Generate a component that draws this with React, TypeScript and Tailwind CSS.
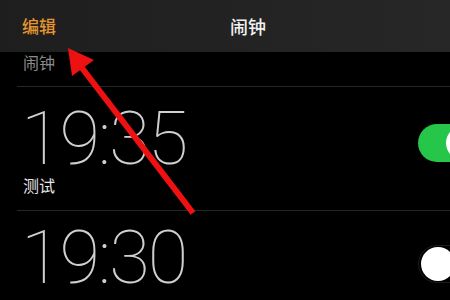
import React from "react";

const cjk = { fontFamily: '"Noto Sans CJK SC", "Noto Sans", sans-serif' };
const thin = { fontFamily: 'Roboto, "Liberation Sans", sans-serif' };

function Toggle({ on }: { on: boolean }) {
  return (
    <div
      className={
        "flex h-[38px] w-[64px] shrink-0 items-center rounded-full px-[2px] " +
        (on ? "bg-[#26c64a] justify-end" : "bg-black border border-[#1c1c1c] justify-start")
      }
    >
      <div className="h-[34px] w-[34px] rounded-full bg-white" />
    </div>
  );
}

export default function App() {
  return (
    <div className="relative h-[300px] w-[450px] overflow-hidden bg-black">
      <div className="flex h-[52px] items-center bg-gradient-to-r from-[#1e1e1e] to-[#272727] pl-[22px]" style={cjk}>
        <span className="text-[17px] font-medium text-[#e3952f]">编辑</span>
        <span className="ml-[174px] text-[18px] font-medium text-[#f2f2f2]">闹钟</span>
      </div>
      <div className="ml-[17px] flex h-[35px] items-start border-b border-[#262626] pl-[6px]">
        <span className="text-[16px] leading-[20px] text-[#8c8c8c]" style={cjk}>闹钟</span>
      </div>
      <div className="ml-[17px] flex h-[124px] items-start justify-between border-b border-[#262626] pl-[4px]">
        <div className="mt-[22px] flex flex-col">
          <span className="text-[74px] font-thin leading-[60px] tracking-[-2px] text-[#cfcfcf]" style={thin}>19:35</span>
          <span className="mt-[6px] pl-[2px] text-[16px] leading-[20px] text-[#e6e6e6]" style={cjk}>测试</span>
        </div>
        <div className="mr-[-32px] mt-[37px]">
          <Toggle on={true} />
        </div>
      </div>
      <div className="ml-[17px] flex h-[100px] items-start justify-between pl-[4px]">
        <span className="mt-[17px] text-[74px] font-thin leading-[60px] tracking-[-2px] text-[#cfcfcf]" style={thin}>19:30</span>
        <div className="mr-[-32px] mt-[34px]">
          <Toggle on={false} />
        </div>
      </div>
      <svg className="pointer-events-none absolute left-0 top-0" width="450" height="300" viewBox="0 0 450 300">
        <line x1="82" y1="68" x2="193" y2="213" stroke="#ee1111" strokeWidth="6" strokeLinecap="butt" />
        <polygon points="68,48 72,76 94,60" fill="#ee1111" />
      </svg>
    </div>
  );
}
